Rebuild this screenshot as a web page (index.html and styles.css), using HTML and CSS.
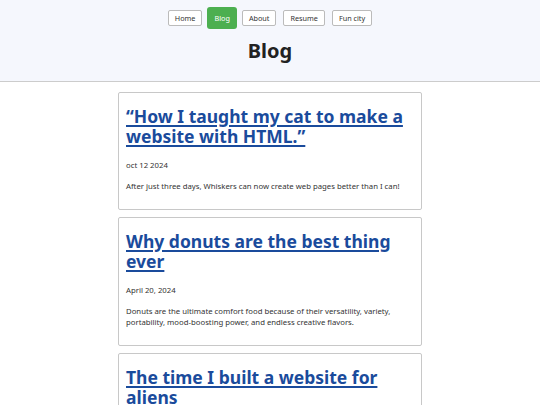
FILE: index.html
```html
<!DOCTYPE html>
<html lang="en">
<head>
<meta charset="utf-8">
<title>Blog</title>
<link rel="stylesheet" href="styles.css">
</head>
<body>
<header class="site-header">
  <nav class="nav">
    <a class="nav-btn" href="#">Home</a>
    <a class="nav-btn active" href="#">Blog</a>
    <a class="nav-btn" href="#">About</a>
    <a class="nav-btn" href="#">Resume</a>
    <a class="nav-btn" href="#">Fun city</a>
  </nav>
  <h1 class="page-title">Blog</h1>
</header>
<main class="posts">
  <article class="post">
    <h2 class="post-title"><a href="#">“How I taught my cat to make a website with HTML.”</a></h2>
    <p class="post-date">oct 12 2024</p>
    <p class="post-text">After just three days, Whiskers can now create web pages better than I can!</p>
  </article>
  <article class="post">
    <h2 class="post-title"><a href="#">Why donuts are the best thing ever</a></h2>
    <p class="post-date">April 20, 2024</p>
    <p class="post-text">Donuts are the ultimate comfort food because of their versatility, variety, portability, mood-boosting power, and endless creative flavors.</p>
  </article>
  <article class="post">
    <h2 class="post-title"><a href="#">The time I built a website for aliens</a></h2>
    <p class="post-date">March 3, 2024</p>
    <p class="post-text">They wanted a landing page for their spaceship.</p>
  </article>
</main>
</body>
</html>
```
FILE: styles.css
```css
html, body {
  margin: 0;
  padding: 0;
  background: #ffffff;
  font-family: "Noto Sans", "Open Sans", sans-serif;
  color: #333333;
}

.site-header {
  background: #f5f7fd;
  border-bottom: 1px solid #cccccc;
  padding: 7px 0 17px;
  text-align: center;
}

.nav {
  display: flex;
  justify-content: center;
  align-items: center;
  gap: 5px;
  height: 22px;
}

.nav-btn {
  display: block;
  box-sizing: border-box;
  height: 16px;
  line-height: 14px;
  padding: 0 6px;
  font-size: 7.25px;
  color: #333333;
  text-decoration: none;
  border: 1px solid #bbbbbb;
  border-radius: 2px;
  background: #ffffff;
}

.nav-btn:nth-child(4),
.nav-btn:nth-child(5) {
  margin-left: 2px;
}

.nav-btn.active {
  height: 22px;
  line-height: 22px;
  border: none;
  padding: 0 7px;
  background: #4caf50;
  color: #ffffff;
  border-radius: 3px;
}

.page-title {
  margin: 8px 0 0;
  font-size: 20px;
  line-height: normal;
  font-weight: 700;
  color: #222222;
}

.posts {
  width: 304px;
  margin: 10px auto 0;
  display: flex;
  flex-direction: column;
  gap: 7px;
}

.post {
  border: 1px solid #c8c8c8;
  border-radius: 2px;
  padding: 13px 7px 17px;
}

.post-title {
  margin: 0 0 14px;
  font-size: 17.5px;
  line-height: 20px;
  font-weight: 700;
}

.post-title a {
  color: #1a4b9c;
  text-decoration: underline;
  text-decoration-thickness: 1.5px;
  text-underline-offset: 2px;
}

.post-date {
  margin: 0 0 10px;
  font-size: 7.75px;
  line-height: 11px;
  color: #333333;
}

.post-text {
  margin: 0;
  font-size: 7.75px;
  line-height: 11px;
  color: #333333;
}
```
